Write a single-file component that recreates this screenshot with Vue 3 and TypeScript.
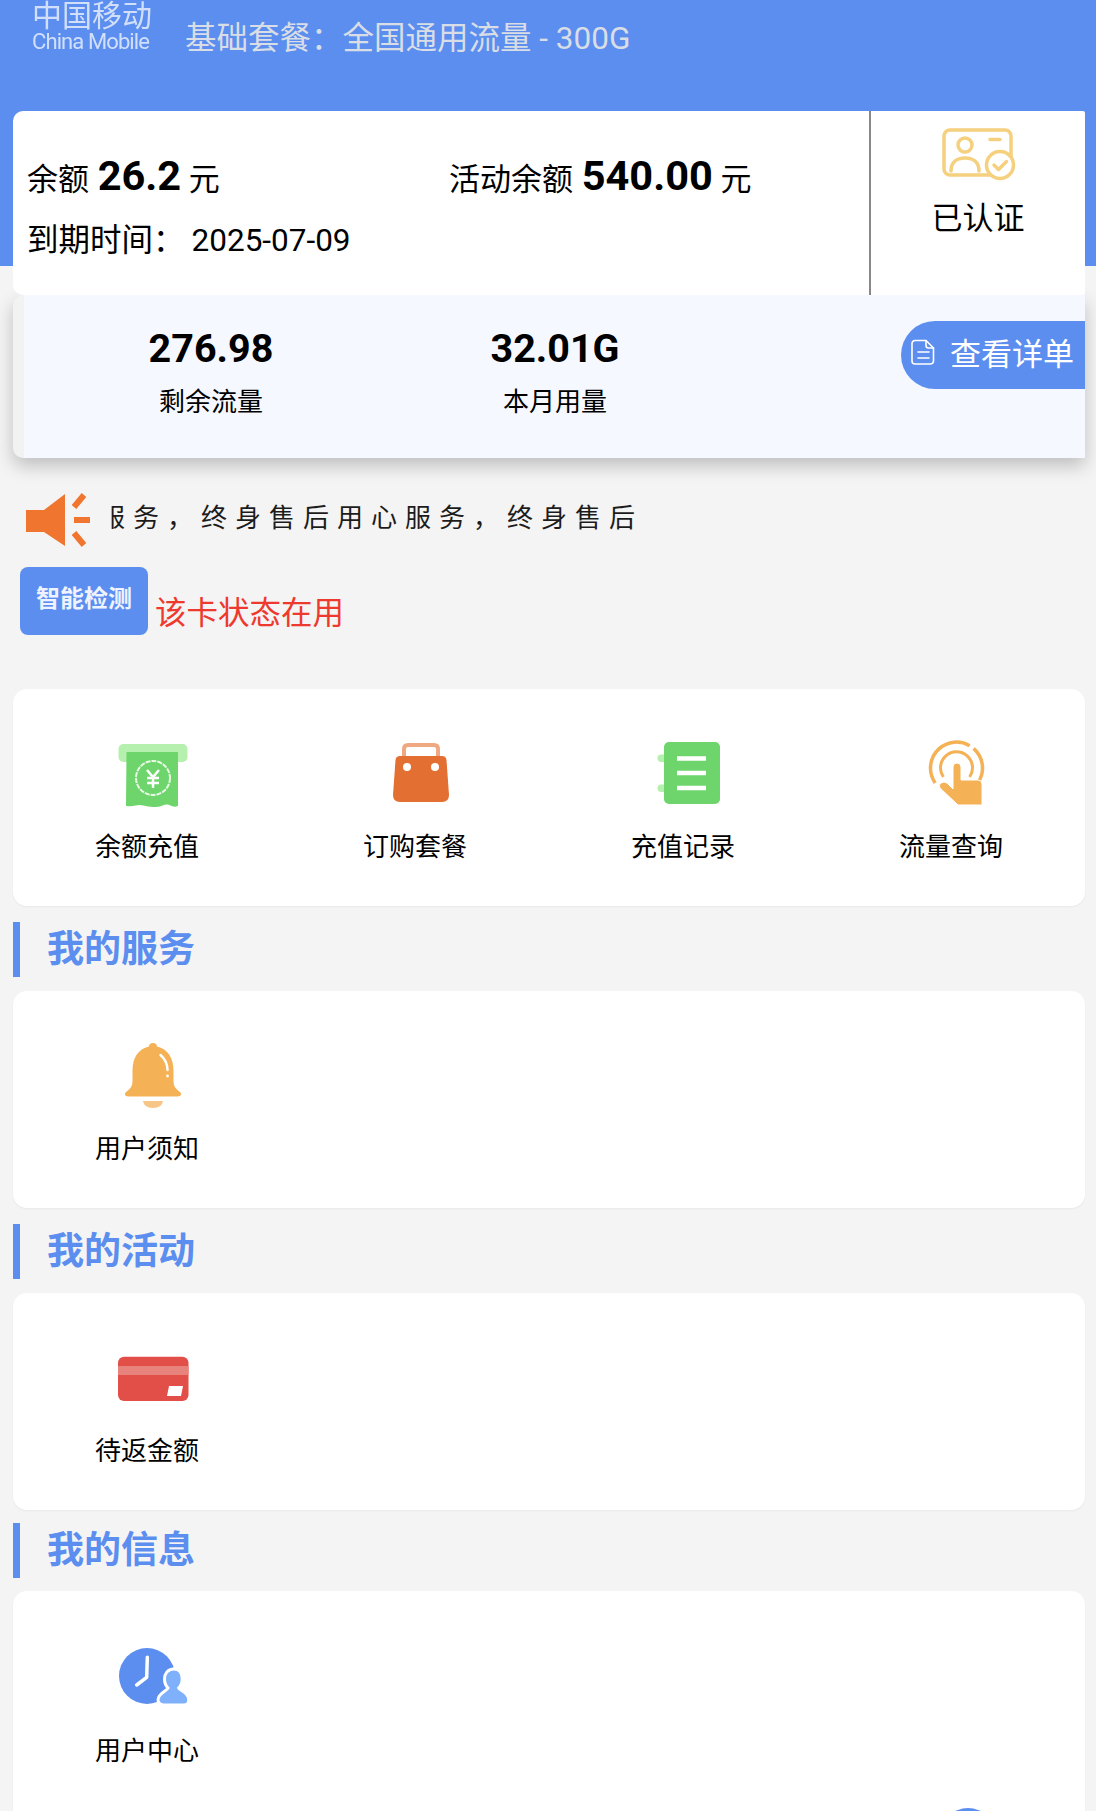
<script setup lang="ts">
interface Entry {
  icon: string;
  label: string;
}

interface Section {
  title: string;
  entries: Entry[];
}

const shortcuts: Entry[] = [
  { icon: "receipt", label: "余额充值" },
  { icon: "bag", label: "订购套餐" },
  { icon: "notebook", label: "充值记录" },
  { icon: "touch", label: "流量查询" },
];

const sections: Section[] = [
  { title: "我的服务", entries: [{ icon: "bell", label: "用户须知" }] },
  { title: "我的活动", entries: [{ icon: "card", label: "待返金额" }] },
  { title: "我的信息", entries: [{ icon: "clock", label: "用户中心" }] },
];

const stats = [
  { value: "276.98", label: "剩余流量" },
  { value: "32.01G", label: "本月用量" },
];
</script>

<template>
  <div class="page">
    <header class="header">
      <div class="logo">
        <div class="logo-cn">中国移动</div>
        <div class="logo-en">China Mobile</div>
      </div>
      <div class="plan">基础套餐：全国通用流量 - 300G</div>
    </header>

    <section class="account">
      <div class="balance">
        <div class="balance-row">
          <div class="money">余额 <b>26.2</b> 元</div>
          <div class="money">活动余额 <b>540.00</b> 元</div>
        </div>
        <div class="expire">到期时间：<span class="expire-date">2025-07-09</span></div>
      </div>
      <div class="verified">
        <svg class="verified-icon" viewBox="0 0 74 54" fill="none" stroke="#f5d07e" stroke-width="3.500" stroke-linecap="round">
          <rect x="2" y="2" width="67" height="45" rx="6" />
          <circle cx="23" cy="17" r="7" />
          <path d="M9 43c0-9 6-13 14-13s14 4 14 13" />
          <path d="M48 11.500h10" />
          <circle cx="58" cy="37" r="13.500" fill="#fff" />
          <path d="M52 37l4.500 4.500 8-8" stroke-linejoin="round" />
        </svg>
        <div class="verified-text">已认证</div>
      </div>
    </section>

    <section class="usage">
      <div v-for="stat in stats" :key="stat.label" class="stat">
        <div class="stat-value">{{ stat.value }}</div>
        <div class="stat-label">{{ stat.label }}</div>
      </div>
      <div class="detail">
        <svg class="detail-icon" viewBox="0 0 24 26" fill="none" stroke="#fff" stroke-width="1.600" stroke-linejoin="round" stroke-linecap="round">
          <path d="M4 1.500h11l7.500 7.500v13a3 3 0 0 1-3 3H4a3 3 0 0 1-3-3v-17.500a3 3 0 0 1 3-3z" />
          <path d="M15 1.500v5a2.500 2.500 0 0 0 2.500 2.500h5" />
          <path d="M7 13h11M7 19h11" />
        </svg>
        <span>查看详单</span>
      </div>
    </section>

    <div class="notice">
      <svg class="notice-icon" viewBox="0 0 66 54" fill="none">
        <path d="M1 17H19L40 1V53L19 39H1Z" fill="#f0752e" />
        <path d="M59 2L49 14M49 27H65M49 40L59 52" stroke="#f0752e" stroke-width="6" />
      </svg>
      <div class="notice-track">
        <div class="notice-text">服务，终身售后用心服务，终身售后</div>
      </div>
    </div>

    <div class="check">
      <div class="check-btn">智能检测</div>
      <div class="check-state">该卡状态在用</div>
    </div>

    <div class="panel panel--first">
      <div v-for="item in shortcuts" :key="item.label" class="entry">
        <svg v-if="item.icon === 'receipt'" class="entry-icon" viewBox="0 0 70 70">
          <rect x="0.500" y="4" width="69" height="18" rx="5" fill="#b6f0ae" />
          <path d="M8.500 12H60V66q-4 1.500-7.500-.5t-8 0-9.500 1.500-9.500-1.500-8 0-9.500.5Z" fill="#6dd56b" />
          <circle cx="35" cy="38" r="17" fill="none" stroke="#e6f9e4" stroke-width="2" stroke-dasharray="5 1" />
          <path d="M29 30l6 7 6-7M35 37v11M29 38h12M29 43h12" fill="none" stroke="#fff" stroke-width="2.500" />
        </svg>
        <svg v-else-if="item.icon === 'bag'" class="entry-icon" viewBox="0 0 70 70">
          <path d="M18 18V9q0-4 4-4h26q4 0 4 4v9" fill="none" stroke="#f0a882" stroke-width="4" />
          <path d="M14 16H56q4 0 4.500 4L63 55q0 7-7 7H14q-7 0-7-7L9.500 20q.5-4 4.500-4Z" fill="#e36f33" />
          <circle cx="21" cy="27" r="4" fill="#fff" />
          <circle cx="49" cy="27" r="4" fill="#fff" />
        </svg>
        <svg v-else-if="item.icon === 'notebook'" class="entry-icon" viewBox="0 0 70 70">
          <rect x="3.500" y="14.500" width="14" height="7.500" rx="3.700" fill="#b6f0ae" />
          <rect x="3.500" y="44.500" width="14" height="7.500" rx="3.700" fill="#b6f0ae" />
          <rect x="10" y="2" width="56" height="62" rx="5" fill="#6dd56b" />
          <path d="M23 18.500h29M23 33h29M23 48h29" stroke="#fff" stroke-width="4.500" />
        </svg>
        <svg v-else-if="item.icon === 'touch'" class="entry-icon" viewBox="0 0 70 70">
          <path d="M13.200 43A26 26 0 1 1 55.800 43" fill="none" stroke="#f4b155" stroke-width="3.500" stroke-dasharray="70 5 60" />
          <path d="M21.400 37A16 16 0 1 1 47.600 37" fill="none" stroke="#f4b155" stroke-width="3" />
          <path d="M31 27a4 4 0 0 1 8 0V40H56q4 0 4 4V65H36L18 48q-2-3 1-5t6 0l6 6Z" fill="#f4b155" stroke="#fff" stroke-width="1" />
        </svg>
        <div class="entry-label">{{ item.label }}</div>
      </div>
    </div>

    <template v-for="group in sections" :key="group.title">
      <h2 class="section-title" :class="{ 'section-title--last': group.title === '我的信息' }">{{ group.title }}</h2>
      <div class="panel" :class="{ 'panel--open': group.title === '我的信息' }">
        <div v-for="item in group.entries" :key="item.label" class="entry">
          <svg v-if="item.icon === 'bell'" class="entry-icon" viewBox="0 0 70 70">
            <path d="M35 2c2.500 0 4 1.500 4 3.500C50 8 55.500 17 55.500 30V40q0 6 4 9l3 2.500q2 3.500-3 4H10.500q-5-.5-3-4l3-2.500q4-3 4-9V30C14.500 17 20 8 31 5.500 31 3.500 32.500 2 35 2Z" fill="#f4b155" />
            <path d="M42.500 14q7 6 7 15" fill="none" stroke="#fff" stroke-width="2.500" stroke-linecap="round" />
            <circle cx="49.500" cy="35" r="1.400" fill="#fff" />
            <path d="M25 60H45Q44 67 35 67T25 60Z" fill="#f7c687" />
          </svg>
          <svg v-else-if="item.icon === 'card'" class="entry-icon" viewBox="0 0 70 70">
            <rect x="0" y="13.700" width="70.500" height="44.300" rx="6" fill="#e24f48" />
            <rect x="0" y="23" width="70.500" height="9" fill="#e8827c" />
            <path d="M51 43H65L63 53H49Z" fill="#fff" />
          </svg>
          <svg v-else-if="item.icon === 'clock'" class="entry-icon" viewBox="0 0 70 70">
            <circle cx="29" cy="35" r="28" fill="#5b8eef" />
            <path d="M29.300 16.300L28.700 36.300 18.700 44" fill="none" stroke="#fff" stroke-width="3.500" stroke-linecap="round" stroke-linejoin="round" />
            <path d="M55.700 28c6 0 8.500 5 8.500 10 0 4-1.500 7-3.500 9 1 3 10 4 10 12 0 3-2 5-5 5H46c-3 0-6-2-6-5 0-7 9-9 10-12-2-2-3.500-5-3.500-9 0-5 3-10 9.200-10Z" fill="#7fb0fb" stroke="#fff" stroke-width="3" />
          </svg>
          <div class="entry-label">{{ item.label }}</div>
        </div>
        <div v-if="group.title === '我的信息'" class="entry entry--next">
          <svg class="entry-icon" viewBox="0 0 70 70">
            <circle cx="46" cy="29" r="28" fill="#5b8eef" />
          </svg>
        </div>
      </div>
    </template>
  </div>
</template>

<style scoped>
.page {
  width: 1096px;
  height: 1811px;
  overflow: hidden;
  background: #f4f4f4;
  font-family: Roboto, "Noto Sans CJK SC", sans-serif;
  color: #000;
}

.header {
  height: 266px;
  background: #5b8eef;
  display: flex;
  align-items: flex-start;
  padding-left: 32px;
  box-sizing: border-box;
}

.logo {
  width: 120px;
  padding-top: 1px;
  color: rgba(255, 255, 255, 0.72);
  filter: blur(0.6px);
  margin-right: 33px;
}

.logo-cn {
  font-size: 30px;
  line-height: 30px;
}

.logo-en {
  font-size: 22px;
  line-height: 22px;
  letter-spacing: -0.9px;
  white-space: nowrap;
}

.plan {
  margin-top: 17px;
  font-size: 31.500px;
  line-height: 44px;
  color: #d9dde6;
  white-space: nowrap;
}

.account {
  margin: -155px 11px 0 13px;
  height: 184px;
  display: flex;
  background: #fff;
  border-radius: 10px 2px 2px 10px;
  position: relative;
  z-index: 1;
}

.balance {
  width: 858px;
  box-sizing: border-box;
  padding: 40px 0 0 14px;
  border-right: 2px solid #888;
}

.balance-row {
  display: grid;
  grid-template-columns: 422px 1fr;
}

.money {
  font-size: 31px;
  line-height: 50px;
  white-space: nowrap;
}

.money b {
  font-size: 41.500px;
  margin: 0 0 0 1px;
}

.expire {
  margin-top: 13px;
  font-size: 31.500px;
  line-height: 46px;
}

.expire-date {
  margin-left: 7px;
}

.verified {
  flex: 1;
  display: flex;
  flex-direction: column;
  align-items: center;
  padding: 17px 0 0 0;
}

.verified-icon {
  width: 74px;
  height: 54px;
  margin-left: 1px;
  filter: blur(0.4px);
}

.verified-text {
  margin-top: 16px;
  font-size: 31px;
  line-height: 42px;
}

.usage {
  margin: 0 11px 0 13px;
  height: 163px;
  display: flex;
  align-items: flex-start;
  box-sizing: border-box;
  padding-left: 15px;
  background: #f5f8ff;
  border-left: 11px solid #f1f2f2;
  border-radius: 10px 0 0 10px;
  box-shadow: 0 8px 18px rgba(0, 0, 0, 0.22);
  position: relative;
}

.stat {
  width: 344px;
  padding-top: 29px;
  text-align: center;
}

.stat-value {
  font-size: 39.500px;
  font-weight: 700;
  line-height: 50px;
}

.stat-label {
  margin-top: 8px;
  font-size: 26px;
  line-height: 40px;
}

.detail {
  margin: 26px 0 0 auto;
  width: 184px;
  height: 68px;
  box-sizing: border-box;
  padding: 0 0 7px 10px;
  display: flex;
  align-items: center;
  gap: 15px;
  background: #5b8eef;
  border-radius: 34px 0 0 34px;
  color: #fff;
  font-size: 31px;
  white-space: nowrap;
}

.detail-icon {
  width: 24px;
  height: 26px;
  flex: none;
}

.notice {
  display: flex;
  align-items: center;
  margin: 35px 0 0 25px;
  height: 54px;
}

.notice-icon {
  width: 66px;
  height: 54px;
  flex: none;
}

.notice-track {
  margin: -4px 0 0 19px;
  width: 530px;
  overflow: hidden;
}

.notice-text {
  margin-left: -11px;
  font-size: 26px;
  line-height: 40px;
  letter-spacing: 8px;
  color: #1c1c1c;
  white-space: nowrap;
}

.check {
  display: flex;
  margin: 20px 0 0 20px;
  height: 68px;
}

.check-btn {
  width: 128px;
  height: 68px;
  box-sizing: border-box;
  padding-top: 12px;
  text-align: center;
  background: #5b8eef;
  border-radius: 8px;
  color: #eef3ff;
  font-size: 24px;
  font-weight: 700;
  line-height: 40px;
}

.check-state {
  margin: 25px 0 0 7px;
  font-size: 31.500px;
  line-height: 44px;
  color: #ee3a2e;
}

.panel {
  margin: 0 11px 0 13px;
  display: grid;
  grid-template-columns: repeat(4, 1fr);
  grid-auto-rows: min-content;
  height: 217px;
  box-sizing: border-box;
  padding: 22px 0;
  background: #fff;
  border-radius: 14px;
  box-shadow: 0 1px 2px rgba(0, 0, 0, 0.05);
}

.panel--first {
  margin-top: 54px;
}

.panel--open {
  height: 320px;
}

.entry {
  grid-column: 1;
  padding-top: 29px;
  text-align: center;
}

.panel--first .entry {
  grid-column: auto;
}

.entry--next {
  grid-column: 4;
  grid-row: 2;
  margin-top: 9px;
}

.entry-icon {
  display: block;
  width: 70px;
  height: 70px;
  margin: 0 auto;
  transform: translate(6px, -1px);
  filter: blur(0.4px);
  overflow: visible;
}

.panel--first .entry-icon {
  transform: translateX(6px);
}

.entry-label {
  margin-top: 18px;
  font-size: 26px;
  line-height: 38px;
}

.panel--open .entry-label {
  margin-top: 20px;
}

.section-title {
  margin: 16px 0 14px 13px;
  height: 55px;
  box-sizing: border-box;
  padding-left: 27px;
  border-left: 7px solid #5b8eef;
  color: #5b8eef;
  font-size: 37px;
  font-weight: 700;
  line-height: 55px;
}

.section-title--last {
  margin: 13px 0 13px 13px;
}
</style>
